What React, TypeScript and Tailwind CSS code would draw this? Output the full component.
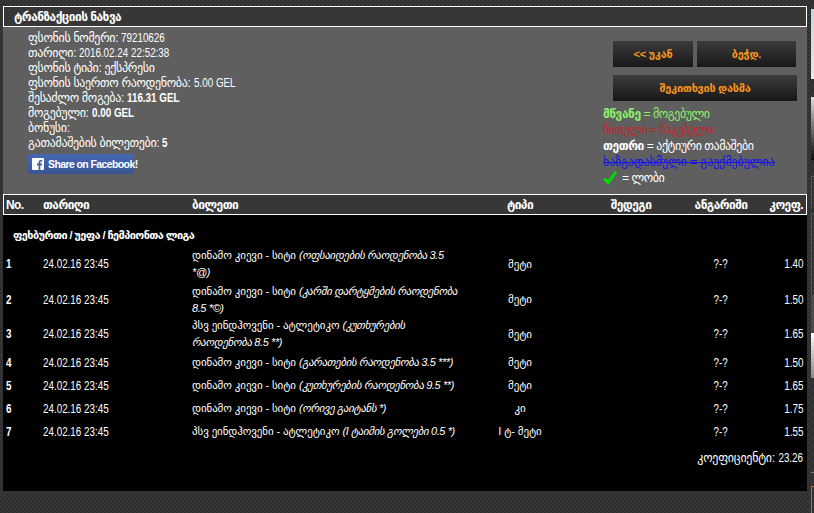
const rows = [
  { n: "1", match: "დინამო კიევი - სიტი", pick: "(ოფსაიდების რაოდენობა 3.5 *@)", type: "მეტი", k: "1.40", h: "h-[36px]" },
  { n: "2", match: "დინამო კიევი - სიტი", pick: "(კარში დარტყმების რაოდენობა 8.5  *©)", type: "მეტი", k: "1.50", h: "h-[35px]" },
  { n: "3", match: "პსვ ეინდჰოვენი - ატლეტიკო", pick: "(კუთხურების რაოდენობა 8.5 **)", type: "მეტი", k: "1.65", h: "h-[34px]" },
  { n: "4", match: "დინამო კიევი - სიტი", pick: "(გარათების რაოდენობა 3.5 ***)", type: "მეტი", k: "1.50", h: "h-[23px]" },
  { n: "5", match: "დინამო კიევი - სიტი", pick: "(კუთხურების რაოდენობა 9.5 **)", type: "მეტი", k: "1.65", h: "h-[23px]" },
  { n: "6", match: "დინამო კიევი - სიტი", pick: "(ორივე გაიტანს *)", type: "კი", k: "1.75", h: "h-[23px]" },
  { n: "7", match: "პსვ ეინდჰოვენი - ატლეტიკო", pick: "(I ტაიმის გოლები 0.5 *)", type: "I ტ- მეტი", k: "1.55", h: "h-[23px]" },
]

// the original numbers are in an Arial Narrow look, so squeeze them
const Num = ({ children, bold, origin = "origin-left" }: { children: React.ReactNode; bold?: boolean; origin?: string }) => (
  <span className={`inline-block text-[12px] tracking-normal whitespace-nowrap scale-x-[.82] ${origin} ${bold ? "font-bold" : ""}`}>{children}</span>
)

const btn = "h-[26px] bg-gradient-to-b from-[#3c3c3c] to-[#181818] text-[#f7941d] font-bold text-[11px] tracking-[-0.3px] whitespace-nowrap"

const App = () => {
  return (
    <div className="w-[814px] h-[513px] overflow-hidden flex bg-[#333333] bg-[repeating-conic-gradient(#383838_0_25%,#2e2e2e_0_50%)] bg-[length:4px_4px] text-white font-['Liberation_Sans','DejaVu_Sans',sans-serif] text-[12px] pl-[3px]">
      <div className="mt-[6px] w-[804px] h-[485px] flex flex-col bg-[#5f5f5f]">
        <div className="h-[21px] border border-white bg-[#373737] pl-[10px] flex items-center font-bold tracking-[-0.55px]">ტრანზაქციის ნახვა</div>
        <div className="h-[167px] flex justify-between">
          <div className="pl-[25px] pt-[4px] leading-[15px] tracking-[-0.33px]">
            <p>ფსონის ნომერი: <Num>79210626</Num></p>
            <p>თარიღი: <Num>2016.02.24 22:52:38</Num></p>
            <p>ფსონის ტიპი: ექსპრესი</p>
            <p>ფსონის საერთო რაოდენობა: <Num>5.00 GEL</Num></p>
            <p>შესაძლო მოგება: <Num bold>116.31 GEL</Num></p>
            <p>მოგებული: <Num bold>0.00 GEL</Num></p>
            <p>ბონუსი:</p>
            <p>გათამაშების ბილეთები: <Num bold>5</Num></p>
            <div className="mt-[3px] w-[106px] h-[20px] rounded-[2px] bg-gradient-to-b from-[#4767b4] to-[#3a5591] flex items-center gap-[4px] pl-[4px] font-bold text-[10.5px] tracking-[-0.6px] whitespace-nowrap">
              <svg width="12" height="12" viewBox="0 0 12 12" className="shrink-0">
                <rect width="12" height="12" rx="1" fill="#ffffff" />
                <path d="M8.300 12V7.400h1.500l.3-1.800H8.300V4.500c0-.5.2-.9.900-.9h1V2c-.3 0-.8-.1-1.300-.1-1.400 0-2.300.8-2.300 2.400v1.300H5v1.800h1.600V12z" fill="#3f5ea6" />
              </svg>
              Share on Facebook!
            </div>
          </div>
          <div className="w-[184px] mr-[10px] pt-[14px]">
            <div className="flex gap-1">
              <button className={`${btn} w-[80px]`}>&lt;&lt; უკან</button>
              <button className={`${btn} w-[99px]`}>ბეჭდ.</button>
            </div>
            <button className={`${btn} mt-2 w-[184px]`}>შეკითხვის დასმა</button>
            <div className="-ml-[10px] mt-[5px] leading-[16px] tracking-[-0.45px] whitespace-nowrap">
              <p className="text-[#8cf06a]"><b>მწვანე</b> = მოგებული</p>
              <p className="text-[#c0272d]">წითელი = წაგებული</p>
              <p><b>თეთრი</b> = აქტიური თამაშები</p>
              <p className="text-[#1414e6] line-through tracking-[-0.1px]">ხაზგადასმული = გაუქმებულია</p>
              <p className="flex items-center gap-[5px]">
                <svg width="14" height="14" viewBox="0 0 14 14"><path d="M0 8.500l2.500-2 2.500 2.800L12 0l2 1.500L5.500 14z" fill="#00e000" /></svg>
                = ლობი
              </p>
            </div>
          </div>
        </div>
        <div className="h-[21px] border border-white bg-[#373737] grid grid-cols-[39px_149px_270px_116px_106px_74px_1fr] items-center font-bold tracking-[-0.6px]">
          <span className="pl-[2px]">No.</span>
          <span>თარიღი</span>
          <span>ბილეთი</span>
          <span className="text-center">ტიპი</span>
          <span className="text-center">შედეგი</span>
          <span className="text-center">ანგარიში</span>
          <span className="text-right pr-[3px]">კოეფ.</span>
        </div>
        <div className="flex-1 bg-black px-px text-[11px] tracking-[-0.1px]">
          <p className="pl-[9px] pt-[13px] h-[31px] leading-[15px] font-bold tracking-[-0.6px]">ფეხბურთი / უეფა / ჩემპიონთა ლიგა</p>
          {rows.map((r) => (
            <div key={r.n} className={`${r.h} grid grid-cols-[39px_149px_270px_116px_106px_74px_1fr] items-center`}>
              <span className="pl-[2px]"><Num bold>{r.n}</Num></span>
              <span><Num>24.02.16 23:45</Num></span>
              <span className="leading-[17px]">{r.match} <i className="tracking-[-0.4px]">{r.pick}</i></span>
              <span className="text-center">{r.type}</span>
              <span></span>
              <span className="text-center"><Num origin="origin-center">?-?</Num></span>
              <span className="text-right pr-[3px]"><Num origin="origin-right">{r.k}</Num></span>
            </div>
          ))}
          <p className="text-right pr-[3px] pt-[6px] text-[12px] tracking-[-0.25px]"><span className="-mr-[5px]">კოეფიციენტი:</span> <Num origin="origin-right">23.26</Num></p>
        </div>
      </div>
      {/* sliver of the next column that the window cuts off */}
      <div className="ml-[4px] w-[3px] h-[513px] flex flex-col shrink-0">
        <div className="mt-[9px] h-[70px] bg-gradient-to-b from-[#c8d4dc] to-[#e8e8e8]"></div>
        <div className="mt-[18px] h-[63px] bg-gradient-to-b from-[#e0e0e0] to-[#111111]"></div>
        <div className="mt-[16px] h-[32px] border-t border-l border-[#555555]"></div>
        <div className="mt-[5px] h-[82px] border-t border-l border-[#555555]"></div>
        <div className="h-[38px] bg-[#4a4a4a]"></div>
        <div className="h-[45px] bg-gradient-to-b from-[#ffffff] to-[#888888]"></div>
        <div className="mt-[94px] h-px bg-[#777777]"></div>
        <div className="mt-[13px] flex-1 border-t border-l border-[#c8661e]"></div>
      </div>
    </div>
  )
}

export default App
